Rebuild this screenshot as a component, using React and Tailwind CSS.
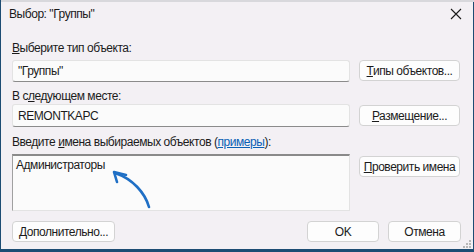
import React from 'react';

const font = { fontFamily: '"Segoe UI", "Liberation Sans", sans-serif' };

const Btn = ({ children, className = '' }) => (
  <div className={`h-[21px] flex items-center justify-center whitespace-nowrap bg-[#fdfdfd] border border-[#d3d3d3] rounded-[4px] text-[12px] text-[#1b1b1b] ${className}`}>
    {children}
  </div>
);

const Field = ({ children, className = '' }) => (
  <div className={`w-[338px] bg-[#fbfbfb] border border-[#e3e3e3] border-b-[#8b8b8b] rounded-[3px] px-[5px] flex items-center text-[12px] text-[#1b1b1b] ${className}`}>
    {children}
  </div>
);

export default function App() {
  return (
    <div className="w-[474px] h-[252px] bg-[#1d4c73] overflow-hidden relative tracking-[-0.45px]" style={font}>
      <div className="h-[2px] bg-[#d8d8dc] ml-[1px]" />
      <div className="ml-[1px] mr-[1px] h-[247px] bg-[#f3f0f4] relative">
        {/* title bar */}
        <div className="h-[24px] flex items-center justify-between pl-[8px] pr-[10px]">
          <span className="text-[12px] text-[#1a1a1a]">Выбор: "Группы"</span>
          <svg width="12" height="12" viewBox="0 0 12 12" className="mr-[1px]">
            <path d="M1 1 L11 11 M11 1 L1 11" stroke="#1a1a1a" strokeWidth="1.1" fill="none" />
          </svg>
        </div>

        <div className="pl-[11px] pr-[12px]">
          <div className="mt-[14px] leading-[16px] text-[12px] text-[#1b1b1b]">
            <u>В</u>ыберите тип объекта:
          </div>
          <div className="mt-[4px] flex gap-[9px]">
            <Field className="h-[22px]">"Группы"</Field>
            <Btn className="w-[101px]"><span><u>Т</u>ипы объектов...</span></Btn>
          </div>

          <div className="mt-[6px] leading-[16px] text-[12px] text-[#1b1b1b]">
            В с<u>л</u>едующем месте:
          </div>
          <div className="flex gap-[9px]">
            <Field className="h-[23px]">REMONTKAPC</Field>
            <Btn className="w-[101px] mt-[1px]"><span><u>Р</u>азмещение...</span></Btn>
          </div>

          <div className="mt-[7px] leading-[16px] text-[12px] text-[#1b1b1b]">
            Введите <u>и</u>мена выбираемых объектов (<span className="text-[#0a5fb4] underline">примеры</span>):
          </div>
          <div className="mt-[4px] flex gap-[9px]">
            <div className="w-[338px] h-[57px] bg-[#fbfbfb] border border-[#e3e3e3] border-t-2 border-t-[#8a8a8a] border-l-[#a0a0a0] px-[3px] pt-[1px] text-[12px] text-[#1b1b1b] leading-[16px] relative">
              Администраторы
              <svg width="60" height="60" viewBox="0 0 60 60" className="absolute left-[82px] top-[-3px]">
                <path d="M54 54 C 50 40, 38 26, 20 20" stroke="#1f6fc5" strokeWidth="2.6" fill="none" strokeLinecap="round" />
                <path d="M31 22 L19 19 L22 29" stroke="#1f6fc5" strokeWidth="2.6" fill="none" strokeLinecap="round" strokeLinejoin="round" />
              </svg>
            </div>
            <Btn className="w-[101px] mt-[2px]"><span><u>П</u>роверить имена</span></Btn>
          </div>

          <div className="mt-[10px] flex items-center">
            <Btn className="w-[103px] h-[20px]"><span><u>Д</u>ополнительно...</span></Btn>
            <div className="flex-1" />
            <Btn className="w-[72px] h-[20px] border-[#0061b8]">OK</Btn>
            <Btn className="w-[73px] h-[20px] ml-[9px]">Отмена</Btn>
          </div>
        </div>

        {/* resize grip */}
        <svg width="10" height="9" viewBox="0 0 10 9" className="absolute right-[1px] bottom-[0px]">
          <rect x="7" y="0" width="2" height="2" fill="#b8b8b8" />
          <rect x="4" y="3" width="2" height="2" fill="#b8b8b8" />
          <rect x="7" y="3" width="2" height="2" fill="#b8b8b8" />
          <rect x="1" y="6" width="2" height="2" fill="#b8b8b8" />
          <rect x="4" y="6" width="2" height="2" fill="#b8b8b8" />
          <rect x="7" y="6" width="2" height="2" fill="#b8b8b8" />
        </svg>
      </div>
    </div>
  );
}
